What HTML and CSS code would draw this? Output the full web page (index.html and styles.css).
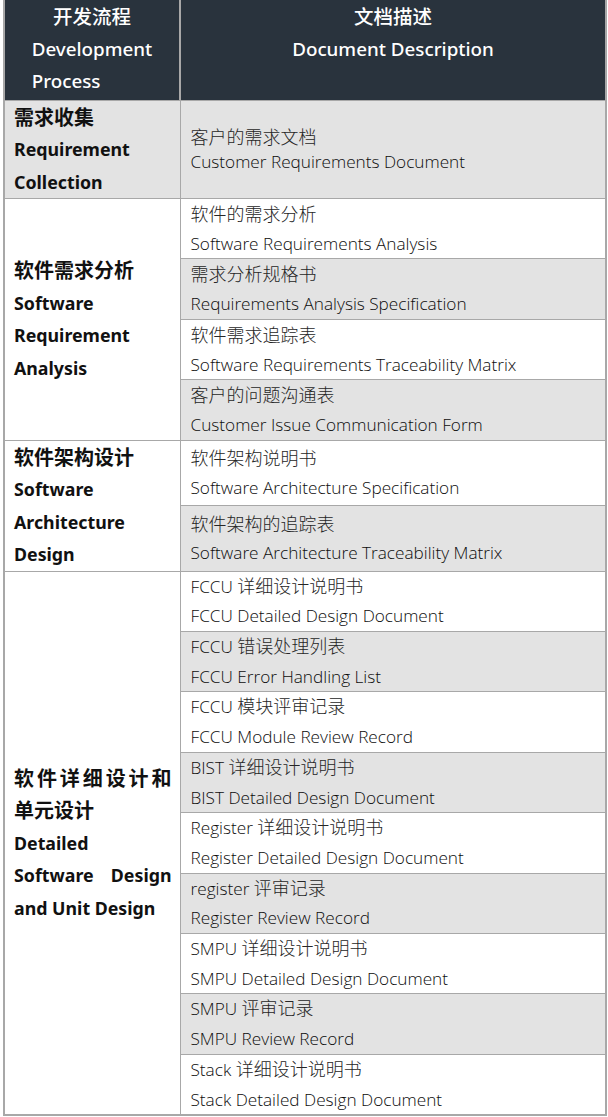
FILE: index.html
```html
<!DOCTYPE html>
<html lang="zh-CN">
<head>
<meta charset="utf-8">
<title>开发流程 文档描述</title>
<link rel="stylesheet" href="styles.css">
</head>
<body>
<table class="doc-table">
  <colgroup><col class="col-process"><col class="col-doc"></colgroup>
  <thead>
    <tr>
      <th class="head-cell"><div class="head-zh">开发流程</div><div class="head-en-wrap"><div class="head-en">Development<br>Process</div></div></th>
      <th class="head-cell"><div class="head-zh">文档描述</div><div class="head-en-wrap"><div class="head-en">Document Description</div></div></th>
    </tr>
  </thead>
  <tbody>
    <tr class="shade">
      <td class="process"><p class="zh">需求收集</p><p>Requirement Collection</p></td>
      <td class="doc doc-tight"><p class="zh">客户的需求文档</p><p>Customer Requirements Document</p></td>
    </tr>

    <tr>
      <td class="process" rowspan="4"><p class="zh">软件需求分析</p><p>Software Requirement Analysis</p></td>
      <td class="doc"><p class="zh">软件的需求分析</p><p>Software Requirements Analysis</p></td>
    </tr>
    <tr class="shade"><td class="doc"><p class="zh">需求分析规格书</p><p>Requirements Analysis Specification</p></td></tr>
    <tr><td class="doc"><p class="zh">软件需求追踪表</p><p>Software Requirements Traceability Matrix</p></td></tr>
    <tr class="shade"><td class="doc"><p class="zh">客户的问题沟通表</p><p>Customer Issue Communication Form</p></td></tr>

    <tr>
      <td class="process" rowspan="2"><p class="zh">软件架构设计</p><p>Software Architecture Design</p></td>
      <td class="doc"><p class="zh">软件架构说明书</p><p>Software Architecture Specification</p></td>
    </tr>
    <tr class="shade"><td class="doc"><p class="zh">软件架构的追踪表</p><p>Software Architecture Traceability Matrix</p></td></tr>

    <tr>
      <td class="process" rowspan="9"><p class="zh">软件详细设计和单元设计</p><p>Detailed Software Design and Unit Design</p></td>
      <td class="doc"><p>FCCU <span class="zh">详细设计说明书</span></p><p>FCCU Detailed Design Document</p></td>
    </tr>
    <tr class="shade"><td class="doc"><p>FCCU <span class="zh">错误处理列表</span></p><p>FCCU Error Handling List</p></td></tr>
    <tr><td class="doc"><p>FCCU <span class="zh">模块评审记录</span></p><p>FCCU Module Review Record</p></td></tr>
    <tr class="shade"><td class="doc"><p>BIST <span class="zh">详细设计说明书</span></p><p>BIST Detailed Design Document</p></td></tr>
    <tr><td class="doc"><p>Register <span class="zh">详细设计说明书</span></p><p>Register Detailed Design Document</p></td></tr>
    <tr class="shade"><td class="doc"><p>register <span class="zh">评审记录</span></p><p>Register Review Record</p></td></tr>
    <tr><td class="doc"><p>SMPU <span class="zh">详细设计说明书</span></p><p>SMPU Detailed Design Document</p></td></tr>
    <tr class="shade"><td class="doc"><p>SMPU <span class="zh">评审记录</span></p><p>SMPU Review Record</p></td></tr>
    <tr><td class="doc"><p>Stack <span class="zh">详细设计说明书</span></p><p>Stack Detailed Design Document</p></td></tr>
  </tbody>
</table>
</body>
</html>
```

FILE: styles.css
```css
html, body {
  margin: 0;
  padding: 0;
  background: #ffffff;
}

body {
  font-family: "Noto Sans", "Noto Sans CJK SC", sans-serif;
}

.doc-table {
  margin: 0 0 0 3px;
  width: 602px;
  border-collapse: collapse;
  table-layout: fixed;
  border: 2px solid #a8a8a8;
  border-top: none;
}

.col-process { width: 176px; }
.col-doc { width: 426px; }

.doc-table p {
  margin: 0;
}

.zh {
  font-family: "Noto Sans CJK SC", sans-serif;
}

.head-cell {
  background: #29333d;
  color: #ffffff;
  font-weight: 500;
  font-size: 18.8px;
  line-height: 32.5px;
  padding: 0 0 2px 0;
  text-align: center;
  vertical-align: top;
  border-left: 2px solid #a8a8a8;
}

.head-cell:first-child { border-left: none; }

.head-cell .head-zh {
  font-family: "Noto Sans CJK SC", sans-serif;
  font-size: 19.5px;
}

.head-en-wrap {
  text-align: center;
}

.head-en {
  display: inline-block;
  text-align: left;
}

.doc-table td {
  border: 1px solid #a8a8a8;
}

.process {
  font-weight: 700;
  font-size: 17.8px;
  line-height: 32.5px;
  color: #111111;
  padding: 0 8px 0 9px;
  vertical-align: middle;
  text-align: justify;
  background: #ffffff;
}

.process .zh {
  font-size: 20px;
}

.doc {
  font-family: "Open Sans", "Noto Sans CJK SC", sans-serif;
  font-weight: 300;
  font-size: 17.2px;
  line-height: 29.7px;
  color: #0d0d0d;
  padding: 0 10px;
  vertical-align: middle;
  background: #ffffff;
}

.doc .zh {
  font-size: 18px;
  font-weight: 300;
  color: #262626;
}

.doc p > .zh {
  line-height: 18px;
}

.doc-tight {
  line-height: 25px;
}

.shade td {
  background: #e3e3e3;
}
```
